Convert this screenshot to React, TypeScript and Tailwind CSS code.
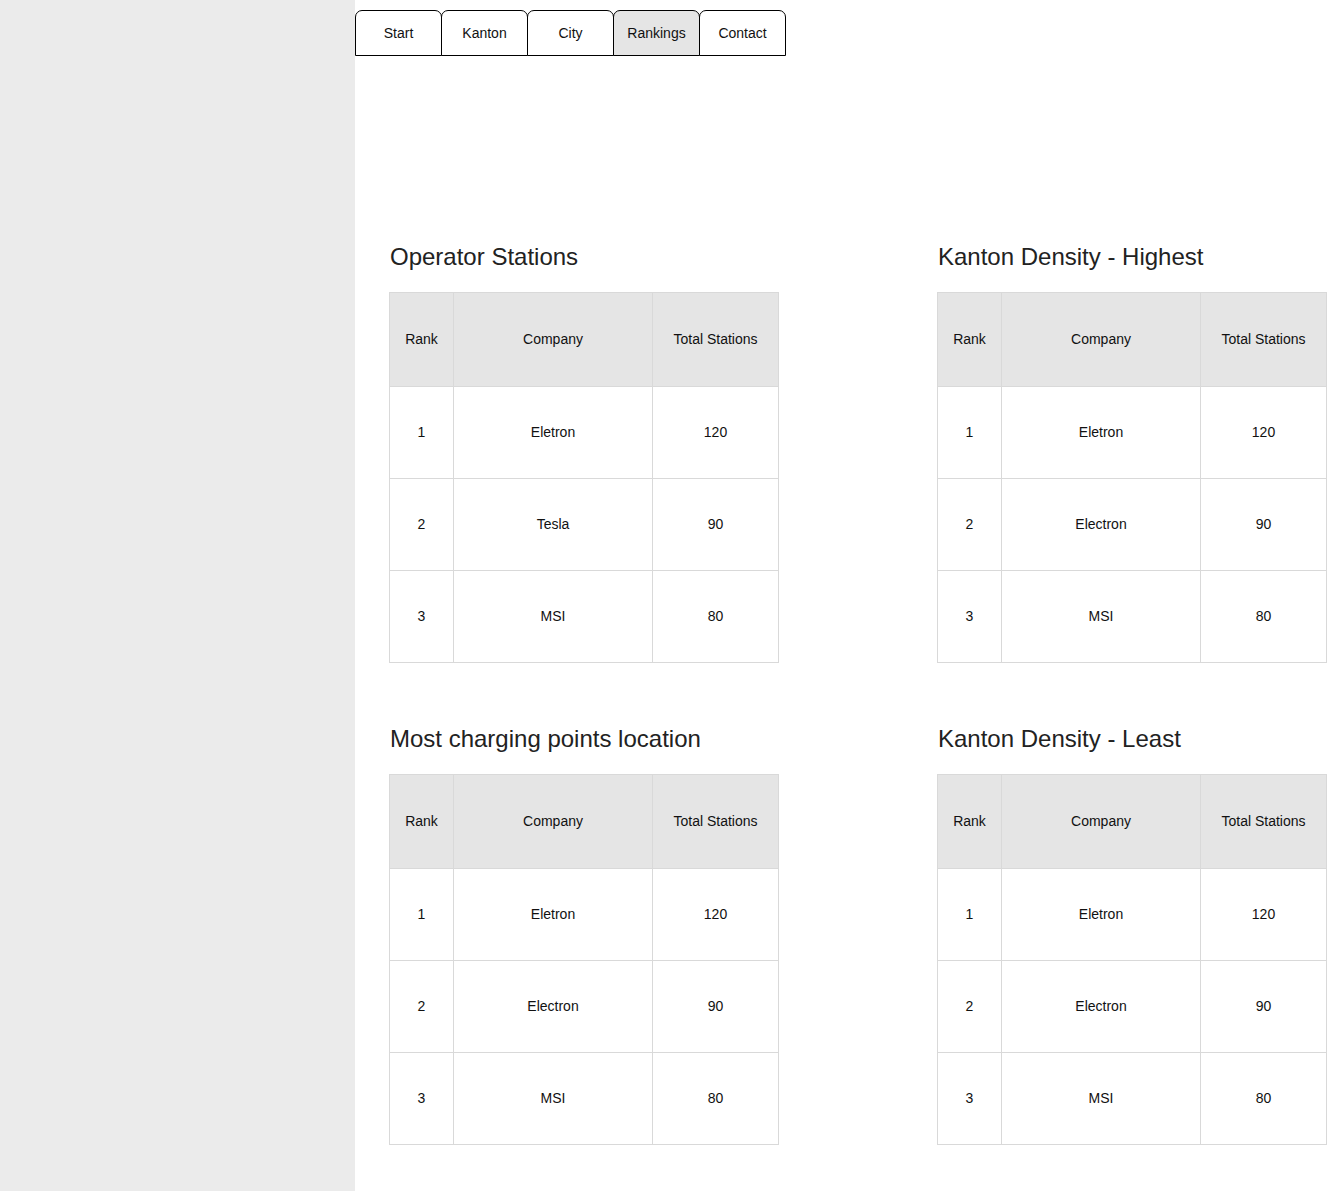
const TABS = ["Start", "Kanton", "City", "Rankings", "Contact"];

type Row = { rank: number; company: string; total: number };

const TABLES: { title: string; rows: Row[] }[] = [
  {
    title: "Operator Stations",
    rows: [
      { rank: 1, company: "Eletron", total: 120 },
      { rank: 2, company: "Tesla", total: 90 },
      { rank: 3, company: "MSI", total: 80 },
    ],
  },
  {
    title: "Kanton Density - Highest",
    rows: [
      { rank: 1, company: "Eletron", total: 120 },
      { rank: 2, company: "Electron", total: 90 },
      { rank: 3, company: "MSI", total: 80 },
    ],
  },
  {
    title: "Most charging points location",
    rows: [
      { rank: 1, company: "Eletron", total: 120 },
      { rank: 2, company: "Electron", total: 90 },
      { rank: 3, company: "MSI", total: 80 },
    ],
  },
  {
    title: "Kanton Density - Least",
    rows: [
      { rank: 1, company: "Eletron", total: 120 },
      { rank: 2, company: "Electron", total: 90 },
      { rank: 3, company: "MSI", total: 80 },
    ],
  },
];

function RankTable({ title, rows }: { title: string; rows: Row[] }) {
  return (
    <section className="w-[390px]">
      <h2 className="pl-px text-[24px] leading-[28px] text-[#222]">{title}</h2>
      <table className="mt-[21px] w-[389px] border-collapse text-[14px] text-[#111] text-center table-fixed">
        <colgroup>
          <col className="w-[64px]" />
          <col className="w-[199px]" />
          <col className="w-[126px]" />
        </colgroup>
        <thead>
          <tr className="h-[94px] bg-[#e5e5e5]">
            <th className="border border-[#d9d9d9] font-normal">Rank</th>
            <th className="border border-[#d9d9d9] font-normal">Company</th>
            <th className="border border-[#d9d9d9] font-normal">Total Stations</th>
          </tr>
        </thead>
        <tbody>
          {rows.map(r => (
            <tr key={r.rank} className="h-[92px]">
              <td className="border border-[#d9d9d9]">{r.rank}</td>
              <td className="border border-[#d9d9d9]">{r.company}</td>
              <td className="border border-[#d9d9d9]">{r.total}</td>
            </tr>
          ))}
        </tbody>
      </table>
    </section>
  );
}

export default function App() {
  return (
    <div className="flex min-h-[1191px] bg-white font-['Liberation_Sans',Arial,sans-serif]">
      <aside className="w-[355px] shrink-0 bg-[#ebebeb]" />
      <main className="flex-1 pt-[10px]">
        <nav className="flex">
          {TABS.map((t, i) => (
            <button
              key={t}
              className={`h-[46px] w-[87px] rounded-t-[7px] border border-black text-[14px] text-[#111] ${
                i > 0 ? "-ml-px" : ""
              } ${t === "Rankings" ? "bg-[#e5e5e5]" : "bg-white"}`}
            >
              {t}
            </button>
          ))}
        </nav>
        <div className="mt-[187px] ml-[34px] grid grid-cols-[390px_390px] gap-x-[158px] gap-y-[62px]">
          {TABLES.map(t => (
            <RankTable key={t.title} title={t.title} rows={t.rows} />
          ))}
        </div>
      </main>
    </div>
  );
}
